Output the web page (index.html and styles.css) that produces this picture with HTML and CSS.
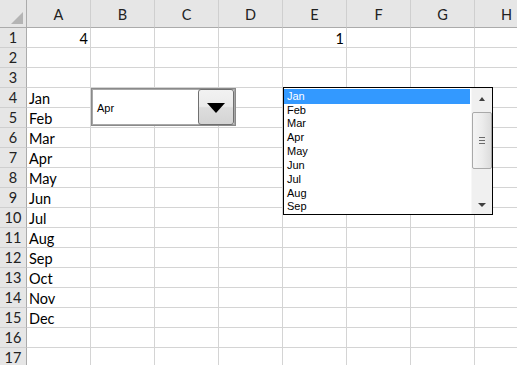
FILE: index.html
```html
<!DOCTYPE html>
<html>
<head>
<meta charset="utf-8">
<link rel="stylesheet" href="styles.css">
</head>
<body>
<div class="sheet">
  <div class="grid">
    <div class="corner"><span class="tri"></span></div>
    <div class="ch">A</div><div class="ch">B</div><div class="ch">C</div><div class="ch">D</div>
    <div class="ch">E</div><div class="ch">F</div><div class="ch">G</div><div class="ch">H</div>

    <div class="rh">1</div><div class="c num">4</div><div class="c"></div><div class="c"></div><div class="c"></div><div class="c num">1</div><div class="c"></div><div class="c"></div><div class="c"></div>
    <div class="rh">2</div><div class="c"></div><div class="c"></div><div class="c"></div><div class="c"></div><div class="c"></div><div class="c"></div><div class="c"></div><div class="c"></div>
    <div class="rh">3</div><div class="c"></div><div class="c"></div><div class="c"></div><div class="c"></div><div class="c"></div><div class="c"></div><div class="c"></div><div class="c"></div>
    <div class="rh">4</div><div class="c">Jan</div><div class="c"></div><div class="c"></div><div class="c"></div><div class="c"></div><div class="c"></div><div class="c"></div><div class="c"></div>
    <div class="rh">5</div><div class="c">Feb</div><div class="c"></div><div class="c"></div><div class="c"></div><div class="c"></div><div class="c"></div><div class="c"></div><div class="c"></div>
    <div class="rh">6</div><div class="c">Mar</div><div class="c"></div><div class="c"></div><div class="c"></div><div class="c"></div><div class="c"></div><div class="c"></div><div class="c"></div>
    <div class="rh">7</div><div class="c">Apr</div><div class="c"></div><div class="c"></div><div class="c"></div><div class="c"></div><div class="c"></div><div class="c"></div><div class="c"></div>
    <div class="rh">8</div><div class="c">May</div><div class="c"></div><div class="c"></div><div class="c"></div><div class="c"></div><div class="c"></div><div class="c"></div><div class="c"></div>
    <div class="rh">9</div><div class="c">Jun</div><div class="c"></div><div class="c"></div><div class="c"></div><div class="c"></div><div class="c"></div><div class="c"></div><div class="c"></div>
    <div class="rh">10</div><div class="c">Jul</div><div class="c"></div><div class="c"></div><div class="c"></div><div class="c"></div><div class="c"></div><div class="c"></div><div class="c"></div>
    <div class="rh">11</div><div class="c">Aug</div><div class="c"></div><div class="c"></div><div class="c"></div><div class="c"></div><div class="c"></div><div class="c"></div><div class="c"></div>
    <div class="rh">12</div><div class="c">Sep</div><div class="c"></div><div class="c"></div><div class="c"></div><div class="c"></div><div class="c"></div><div class="c"></div><div class="c"></div>
    <div class="rh">13</div><div class="c">Oct</div><div class="c"></div><div class="c"></div><div class="c"></div><div class="c"></div><div class="c"></div><div class="c"></div><div class="c"></div>
    <div class="rh">14</div><div class="c">Nov</div><div class="c"></div><div class="c"></div><div class="c"></div><div class="c"></div><div class="c"></div><div class="c"></div><div class="c"></div>
    <div class="rh">15</div><div class="c">Dec</div><div class="c"></div><div class="c"></div><div class="c"></div><div class="c"></div><div class="c"></div><div class="c"></div><div class="c"></div>
    <div class="rh">16</div><div class="c"></div><div class="c"></div><div class="c"></div><div class="c"></div><div class="c"></div><div class="c"></div><div class="c"></div><div class="c"></div>
    <div class="rh">17</div><div class="c"></div><div class="c"></div><div class="c"></div><div class="c"></div><div class="c"></div><div class="c"></div><div class="c"></div><div class="c"></div>
  </div>

  <div class="combo">
    <div class="combo-text">Apr</div>
    <div class="combo-btn"><span class="down"></span></div>
  </div>

  <div class="listbox">
    <div class="items">
      <div class="item sel">Jan</div>
      <div class="item">Feb</div>
      <div class="item">Mar</div>
      <div class="item">Apr</div>
      <div class="item">May</div>
      <div class="item">Jun</div>
      <div class="item">Jul</div>
      <div class="item">Aug</div>
      <div class="item">Sep</div>
    </div>
    <div class="scroll">
      <div class="arrow up"></div>
      <div class="track">
        <div class="thumb"><span class="grip"></span><span class="grip"></span><span class="grip"></span></div>
      </div>
      <div class="arrow dn"></div>
    </div>
  </div>
</div>
</body>
</html>
```

FILE: styles.css
```css
html, body {
  margin: 0;
  padding: 0;
  width: 517px;
  height: 365px;
  overflow: hidden;
  background: #ffffff;
}

.sheet {
  position: relative;
  width: 517px;
  height: 365px;
  overflow: hidden;
  font-family: Lato, "Liberation Sans", sans-serif;
}

.grid {
  display: grid;
  grid-template-columns: 27px repeat(8, 64px);
  grid-template-rows: 28px repeat(17, 20px);
  width: 539px;
}

.corner {
  background: #e6e6e6;
  border-right: 1px solid #ababab;
  border-bottom: 1px solid #ababab;
  box-sizing: border-box;
  position: relative;
}

.tri {
  position: absolute;
  right: 3px;
  bottom: 3px;
  width: 0;
  height: 0;
  border-left: 12px solid transparent;
  border-bottom: 12px solid #b4b4b4;
}

.ch {
  background: #e6e6e6;
  border-bottom: 1px solid #ababab;
  border-right: 1px solid #cfcfcf;
  box-sizing: border-box;
  text-align: center;
  font-size: 14.5px;
  line-height: 27px;
  color: #222222;
  padding-top: 1px;
}

.rh {
  background: #e6e6e6;
  border-right: 1px solid #ababab;
  border-bottom: 1px solid #cfcfcf;
  box-sizing: border-box;
  text-align: center;
  font-size: 14.5px;
  line-height: 20px;
  color: #222222;
}

.c {
  border-right: 1px solid #d4d4d4;
  border-bottom: 1px solid #d4d4d4;
  box-sizing: border-box;
  font-size: 14.5px;
  line-height: 21px;
  padding-left: 2px;
  color: #000000;
  white-space: nowrap;
}

.c.num {
  text-align: right;
  padding-left: 0;
  padding-right: 2px;
}

/* Combo box (form control dropdown) */
.combo {
  position: absolute;
  left: 91px;
  top: 88px;
  width: 145px;
  height: 38px;
  box-sizing: border-box;
  border: 1px solid #8a8a8a;
  box-shadow: inset 0 0 0 1px #a8a8a8;
  background: #ffffff;
  display: flex;
  align-items: center;
  justify-content: space-between;
  padding: 0 1px 0 5px;
  font-family: "Liberation Sans", Arial, sans-serif;
  font-size: 11px;
  color: #000000;
}

.combo-text {
  padding-top: 2px;
}

.combo-btn {
  width: 36px;
  height: 36px;
  box-sizing: border-box;
  border: 1px solid #707070;
  border-radius: 3px;
  background: linear-gradient(#f2f2f2 0%, #ebebeb 48%, #dddddd 52%, #d4d4d4 100%);
  display: flex;
  align-items: center;
  justify-content: center;
}

.down {
  width: 0;
  height: 0;
  border-left: 9px solid transparent;
  border-right: 9px solid transparent;
  border-top: 10px solid #000000;
  margin-top: 1px;
}

/* List box */
.listbox {
  position: absolute;
  left: 283px;
  top: 87px;
  width: 210px;
  height: 128px;
  box-sizing: border-box;
  border: 1px solid #000000;
  background: #ffffff;
  display: flex;
  font-family: "Liberation Sans", Arial, sans-serif;
  font-size: 11px;
  color: #000000;
}

.items {
  flex: 1;
  padding: 1px 1px 0 0;
}

.item {
  height: 13.85px;
  line-height: 13.85px;
  padding-left: 3px;
}

.item.sel {
  background: #3399ff;
  color: #ffffff;
  height: 14.5px;
  line-height: 14.5px;
}

.scroll {
  width: 21px;
  background: #f0f0f0;
  border-left: 1px solid #f7f7f7;
  display: flex;
  flex-direction: column;
  box-sizing: border-box;
}

.arrow {
  height: 22px;
  display: flex;
  align-items: center;
  justify-content: center;
}

.arrow.up::before {
  content: "";
  width: 0;
  height: 0;
  border-left: 3.5px solid transparent;
  border-right: 3.5px solid transparent;
  border-bottom: 4px solid #404040;
  margin-top: -1px;
}

.arrow.dn::before {
  content: "";
  width: 0;
  height: 0;
  border-left: 4px solid transparent;
  border-right: 4px solid transparent;
  border-top: 4px solid #404040;
  margin-top: 4px;
}

.track {
  flex: 1;
  padding-top: 2px;
}

.thumb {
  height: 57px;
  margin-left: 0;
  margin-right: 0;
  box-sizing: border-box;
  border: 1px solid #a9a9a9;
  border-radius: 2px;
  background: linear-gradient(to right, #f4f4f4 0%, #ececec 50%, #dcdcdc 100%);
  display: flex;
  flex-direction: column;
  align-items: center;
  justify-content: center;
  gap: 2px;
}

.grip {
  display: block;
  width: 6px;
  height: 1px;
  background: #6a6a6a;
}
```
